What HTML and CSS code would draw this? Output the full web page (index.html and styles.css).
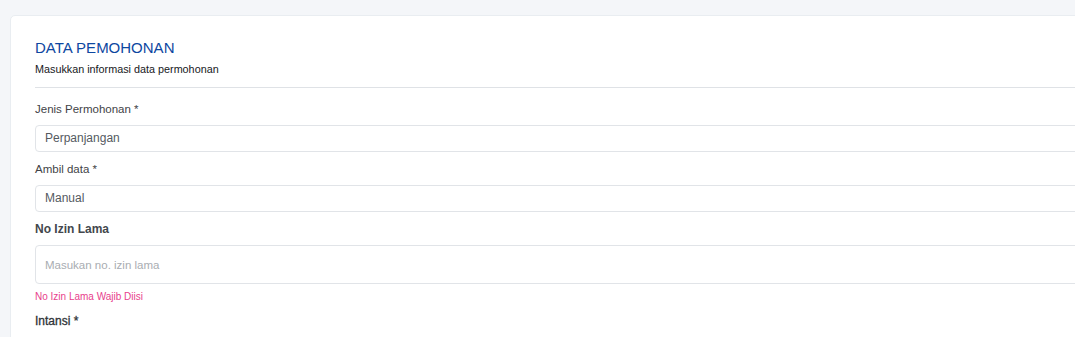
FILE: index.html
```html
<!DOCTYPE html>
<html>
  <head>
    <meta charset="utf-8">
    <link rel="stylesheet" href="styles.css">
    <title>Data Pemohon</title>
  </head>
  <body>
    <div class="card">
      <h3 class="card-title">DATA PEMOHONAN</h3>
      <p class="card-sub">Masukkan informasi data permohonan</p>
      <hr class="divider">

      <form class="form">
        <div class="group">
          <label class="label">Jenis Permohonan *</label>
          <div class="control">Perpanjangan</div>
        </div>
        <div class="group">
          <label class="label">Ambil data *</label>
          <div class="control">Manual</div>
        </div>
        <div class="group">
          <label class="label bold">No Izin Lama</label>
          <input class="control big" placeholder="Masukan no. izin lama">
          <div class="error">No Izin Lama Wajib Diisi</div>
        </div>
        <div class="group">
          <label class="label dark">Intansi *</label>
          <div class="control">&nbsp;</div>
        </div>
      </form>
    </div>
  </body>
</html>
```

FILE: styles.css
```css
html, body {
  margin: 0;
  height: 100%;
  overflow: hidden;
}
body {
  background: #f4f6f9;
  font-family: "Liberation Sans", Arial, sans-serif;
  padding: 15px 0 0 10px;
  box-sizing: border-box;
}

.card {
  width: 1120px;
  background: #fff;
  border: 1px solid #e9edf1;
  border-radius: 5px;
  padding: 22px 24px;
}

.card-title {
  margin: 0;
  font-size: 15px;
  line-height: 20px;
  font-weight: normal;
  color: #0d47a1;
}
.card-sub {
  margin: 3px 0 0;
  font-size: 10.8px;
  line-height: 16px;
  color: #16181b;
}
.divider {
  border: 0;
  border-top: 1px solid #dfe2e6;
  margin: 10px 0 12px;
}

.group {
  display: flex;
  flex-direction: column;
  margin-bottom: 8px;
}
.label {
  font-size: 11.5px;
  line-height: 18px;
  color: #3f4347;
  margin-bottom: 7px;
}
.label.bold {
  font-size: 12px;
  font-weight: bold;
  color: #43474c;
}
.label.dark {
  font-size: 12px;
  color: #2f3337;
  -webkit-text-stroke: 0.3px #2f3337;
}

.control {
  box-sizing: border-box;
  height: 27px;
  border: 1px solid #e1e4e8;
  border-radius: 4px;
  padding: 0 9px;
  font-family: inherit;
  font-size: 12px;
  line-height: 25px;
  color: #555a5f;
  background: #fff;
}
.control.big {
  height: 39px;
  width: 100%;
  outline: none;
  font-size: 11.5px;
}
.control::placeholder {
  color: #a9adb2;
}

.error {
  margin-top: 6px;
  font-size: 10px;
  line-height: 14px;
  color: #e83e8c;
}
```
